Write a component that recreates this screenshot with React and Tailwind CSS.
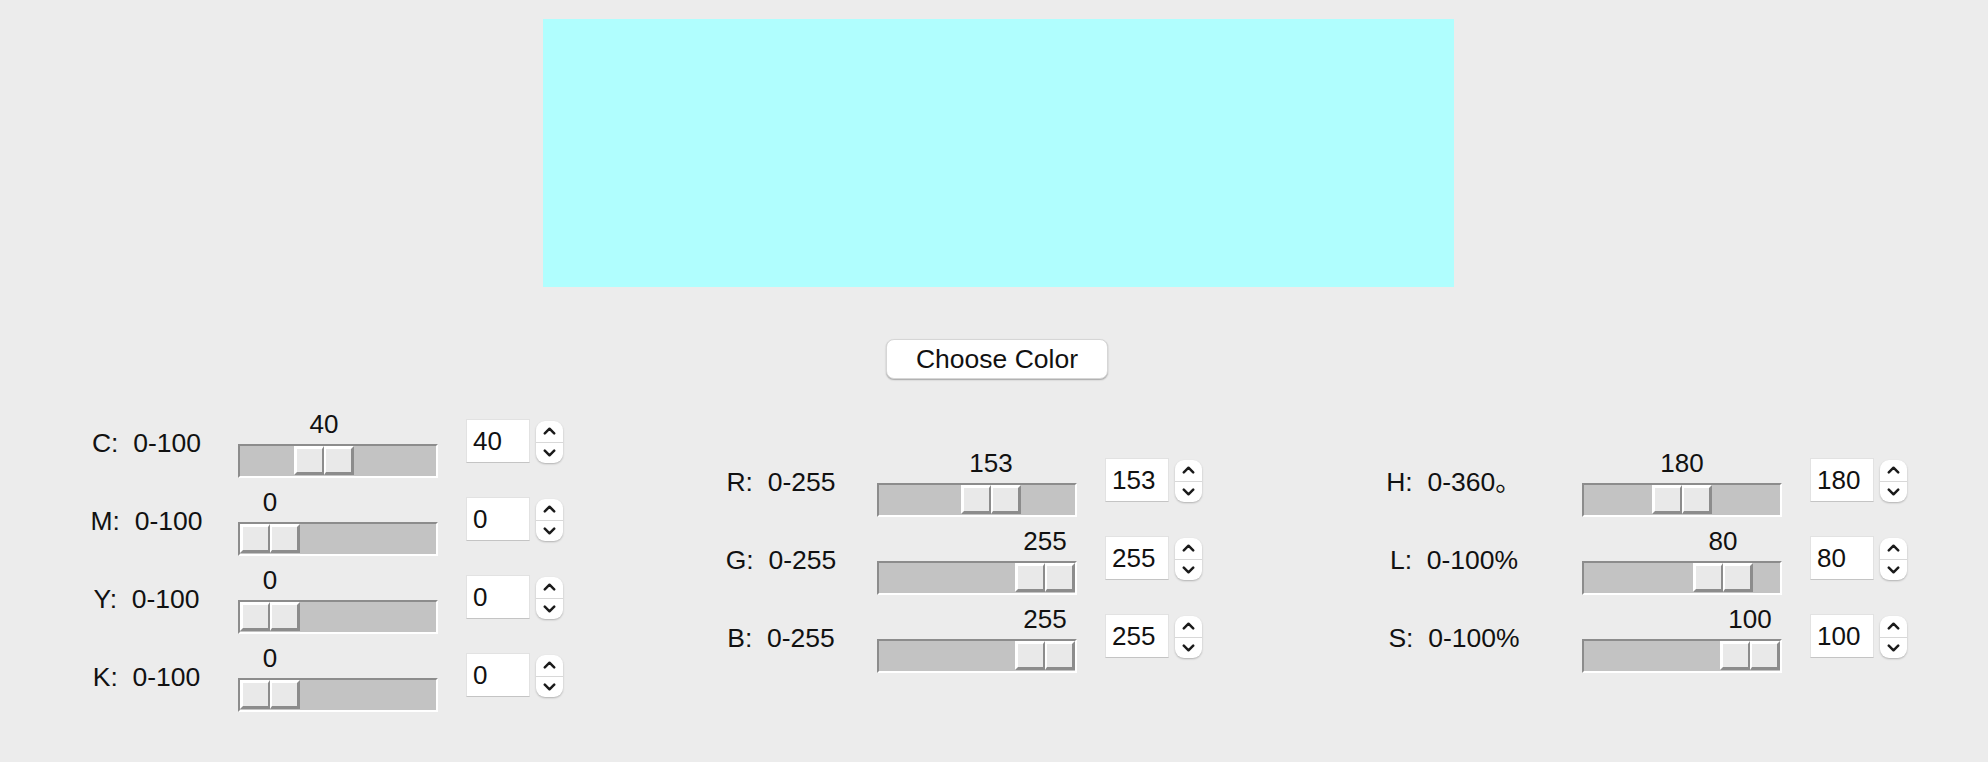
import React from 'react';

const FONT = "font-['Liberation_Sans',Arial,'Noto_Sans_CJK_SC',sans-serif]";

function Thumb({ offset }) {
  return (
    <div className="absolute top-0 h-[29px] flex" style={{ left: offset }}>
      <div className="w-[30px] h-full bg-[#e9e9e9] border-t-[3px] border-l-[3px] border-b-[3px] border-r-2 border-t-white border-l-white border-b-[#8c8c8c] border-r-[#8c8c8c]" />
      <div className="w-[30px] h-full bg-[#e9e9e9] border-t-[3px] border-l-2 border-b-[3px] border-r-[3px] border-t-white border-l-white border-b-[#8c8c8c] border-r-[#8c8c8c]" />
    </div>
  );
}

function Slider({ value, max }) {
  const offset = Math.round((value / max) * 136);
  return (
    <div className="flex flex-col w-[200px]">
      <div className="relative h-[29px]">
        <span className="absolute top-0 -translate-x-1/2 leading-[29px]" style={{ left: offset + 32 }}>
          {value}
        </span>
      </div>
      <div className="relative mt-[5px] h-[34px] bg-[#c3c3c3] border-2 border-t-[#8c8c8c] border-l-[#8c8c8c] border-b-white border-r-white">
        <Thumb offset={offset} />
      </div>
    </div>
  );
}

function Spinner() {
  return (
    <div className="ml-[6px] mb-[4px] w-[27px] h-[42px] bg-white rounded-[9px] shadow-[0_1px_2px_rgba(0,0,0,0.25)] flex flex-col">
      <div className="flex-1 flex items-center justify-center border-b border-[#d8d8d8]">
        <svg width="13" height="8" viewBox="0 0 13 8" fill="none">
          <path d="M1.8 6.3 L6.5 1.7 L11.2 6.3" stroke="#1a1a1a" strokeWidth="2.5" strokeLinecap="round" strokeLinejoin="round" />
        </svg>
      </div>
      <div className="flex-1 flex items-center justify-center">
        <svg width="13" height="8" viewBox="0 0 13 8" fill="none">
          <path d="M1.8 1.7 L6.5 6.3 L11.2 1.7" stroke="#1a1a1a" strokeWidth="2.5" strokeLinecap="round" strokeLinejoin="round" />
        </svg>
      </div>
    </div>
  );
}

function Row({ label, value, max, labelWidth }) {
  return (
    <div className="flex items-center h-[78px]">
      <div className="text-center whitespace-pre text-[26.5px]" style={{ width: labelWidth }}>
        {label}
      </div>
      <Slider value={value} max={max} />
      <div className="ml-[28px] mb-[6px] w-[64px] h-[44px] bg-white border border-[#e2e2e2] border-b-[#c4c4c4] pl-[6px] leading-[42px]">
        {value}
      </div>
      <Spinner />
    </div>
  );
}

export default function App() {
  const cmyk = [
    { label: 'C:  0-100', value: 40 },
    { label: 'M:  0-100', value: 0 },
    { label: 'Y:  0-100', value: 0 },
    { label: 'K:  0-100', value: 0 },
  ];
  const rgb = [
    { label: 'R:  0-255', value: 153 },
    { label: 'G:  0-255', value: 255 },
    { label: 'B:  0-255', value: 255 },
  ];
  const hsl = [
    { label: 'H:  0-360。', value: 180, max: 360 },
    { label: 'L:  0-100%', value: 80, max: 100 },
    { label: 'S:  0-100%', value: 100, max: 100 },
  ];

  return (
    <div className={`w-full h-[762px] bg-[#ececec] text-[26px] text-[#111] ${FONT} flex flex-col`}>
      {/* colour preview */}
      <div className="mt-[19px] ml-[543px] w-[911px] h-[268px] bg-[#b0fefe]" />

      <button className="mt-[52px] ml-[886px] w-[222px] h-[40px] bg-white rounded-[8px] border border-[#d6d6d6] shadow-[0_1px_1.5px_rgba(0,0,0,0.3)] text-[26.5px] leading-none">
        Choose Color
      </button>

      {/* sliders */}
      <div className="mt-[26px] flex items-center">
        <div className="ml-[55px] flex flex-col">
          {cmyk.map((r) => (
            <Row key={r.label} label={r.label} value={r.value} max={100} labelWidth={183} />
          ))}
        </div>
        <div className="ml-[122px] flex flex-col">
          {rgb.map((r) => (
            <Row key={r.label} label={r.label} value={r.value} max={255} labelWidth={192} />
          ))}
        </div>
        <div className="ml-[124px] flex flex-col">
          {hsl.map((r) => (
            <Row key={r.label} label={r.label} value={r.value} max={r.max} labelWidth={256} />
          ))}
        </div>
      </div>
    </div>
  );
}
